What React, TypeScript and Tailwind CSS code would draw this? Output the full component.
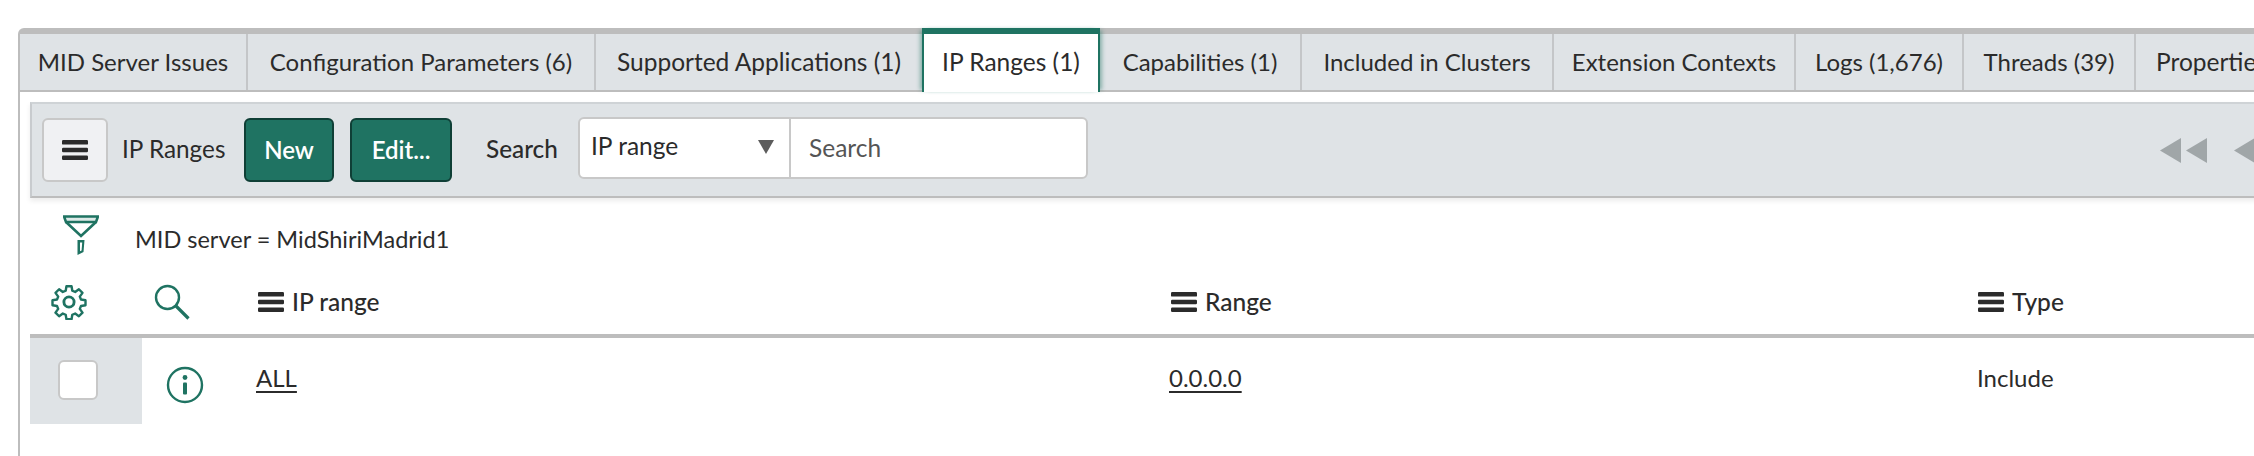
const TABS = [
  { label: "MID Server Issues", width: 228 },
  { label: "Configuration Parameters (6)", width: 348 },
  { label: "Supported Applications (1)", width: 326 },
  { label: "IP Ranges (1)", width: 178, active: true },
  { label: "Capabilities (1)", width: 202 },
  { label: "Included in Clusters", width: 252 },
  { label: "Extension Contexts", width: 242 },
  { label: "Logs (1,676)", width: 168 },
  { label: "Threads (39)", width: 172 },
  { label: "Properties", width: 160 },
];

function Bars({ className }: { className?: string }) {
  return (
    <svg className={className} viewBox="0 0 26 20" fill="#2b2b2b">
      <rect x="0" y="0" width="26" height="4.6" rx="1.2" />
      <rect x="0" y="7.7" width="26" height="4.6" rx="1.2" />
      <rect x="0" y="15.4" width="26" height="4.6" rx="1.2" />
    </svg>
  );
}

function Funnel() {
  return (
    <svg className="w-[36px] h-[41px]" viewBox="0 0 36 41" fill="none" stroke="#1f7362" strokeWidth="2.6">
      <path d="M1 1.5H35L33 7H3Z" fill="#1f7362" fillOpacity="0.15" />
      <path d="M3 7L18 21L33 7" />
      <path d="M14.5 25H21.5L20.5 37L14.5 40Z" fill="#1f7362" stroke="none" />
      <path d="M17 27.5H19.2L18.6 35.5L17 36.3Z" fill="#ffffff" stroke="none" />
    </svg>
  );
}

function Gear() {
  return (
    <svg className="w-[36px] h-[36px]" viewBox="0 0 24 24" fill="none" stroke="#1f7362" strokeWidth="1.6" strokeLinejoin="round">
      <path d="M10.3 1.5h3.4l.5 3 1.9.8 2.5-1.8 2.4 2.4-1.8 2.5.8 1.9 3 .5v3.4l-3 .5-.8 1.9 1.8 2.5-2.4 2.4-2.5-1.8-1.9.8-.5 3h-3.4l-.5-3-1.9-.8-2.5 1.8-2.4-2.4 1.8-2.5-.8-1.9-3-.5v-3.4l3-.5.8-1.9-1.8-2.5 2.4-2.4 2.5 1.8 1.9-.8z" />
      <circle cx="12" cy="12" r="3.4" strokeWidth="1.9" />
    </svg>
  );
}

function Magnifier() {
  return (
    <svg className="w-[36px] h-[36px]" viewBox="0 0 36 36" fill="none" stroke="#1f7362">
      <circle cx="13.5" cy="13.5" r="11.5" strokeWidth="2.4" />
      <path d="M22 22L34.5 34.5" strokeWidth="3.2" />
    </svg>
  );
}

function Info() {
  return (
    <svg className="w-[38px] h-[38px]" viewBox="0 0 38 38" fill="none" stroke="#1f7362">
      <circle cx="19" cy="19" r="17" strokeWidth="2.4" />
      <rect x="17" y="16.5" width="4" height="12" rx="1" fill="#1f7362" stroke="none" />
      <circle cx="19" cy="11.5" r="2.4" fill="#1f7362" stroke="none" />
    </svg>
  );
}

function ColumnHead({ label }: { label: string }) {
  return (
    <div className="flex items-center gap-[8px] text-[24.5px] font-medium text-[#2b2b2b]">
      <Bars className="w-[26px] h-[20px]" />
      <span>{label}</span>
    </div>
  );
}

export default function App() {
  return (
    <div className="w-[2254px] h-[456px] overflow-hidden bg-white pt-[28px] pl-[18px] font-['Lato',sans-serif] text-[#2b2b2b]">
      <div className="w-[2400px] h-[428px] border-l-2 border-t-[6px] border-[#bdbdbd] rounded-tl-[6px]">
        {/* Tabs */}
        <div className="flex h-[58px] border-b-[2px] border-[#bdbdbd] bg-[#dfe3e6]">
          {TABS.map((tab, i) =>
            tab.active ? (
              <div
                key={tab.label}
                style={{ width: tab.width }}
                className="shrink-0 -mt-[6px] -mb-[2px] h-[64px] flex items-center justify-center bg-white text-[24.5px] border-x-2 border-t-[6px] border-[#1f7362] shadow-[4px_0_4px_-2px_rgba(31,115,98,0.45),-4px_0_4px_-2px_rgba(31,115,98,0.45)] z-10"
              >
                <span className="pb-[2px]">{tab.label}</span>
              </div>
            ) : (
              <div
                key={tab.label}
                style={{ width: tab.width }}
                className={
                  i === TABS.length - 1
                    ? "shrink-0 flex items-center pl-[20px] text-[24.5px]"
                    : TABS[i + 1]?.active
                      ? "shrink-0 flex items-center justify-center text-[24.5px]"
                      : "shrink-0 flex items-center justify-center text-[24px] border-r-2 border-[#c4c6c8]"
                }
              >
                {tab.label}
              </div>
            ),
          )}
        </div>

        {/* Toolbar */}
        <div className="flex items-center h-[96px] ml-[10px] mt-[10px] pl-[10px] bg-[#dfe3e6] border-l-2 border-t-2 border-b-2 border-t-[#cfd3d6] border-l-[#c8cbce] border-b-[#bdbdbd] shadow-[0_3px_5px_rgba(0,0,0,0.08)]">
          <button className="flex items-center justify-center w-[66px] h-[64px] bg-[#f0f1f3] border-2 border-[#c8c8c8] rounded-[6px]">
            <Bars className="w-[26px] h-[20px]" />
          </button>
          <span className="ml-[14px] w-[122px] -mt-[2px] text-[24.3px]">IP Ranges</span>
          <button className="w-[90px] h-[64px] bg-[#1f7362] border-2 border-[#0f3f36] rounded-[6px] text-white text-[24px] font-semibold">New</button>
          <button className="ml-[16px] w-[102px] h-[64px] bg-[#1f7362] border-2 border-[#0f3f36] rounded-[6px] text-white text-[24px] font-semibold">Edit...</button>
          <span className="ml-[34px] w-[92px] -mt-[2px] text-[24.3px] font-medium">Search</span>
          <div className="flex h-[62px] w-[510px] -mt-[4px] bg-white border-2 border-[#c8c8c8] rounded-[6px]">
            <div className="flex items-center justify-between w-[211px] pl-[11px] pr-[15px] border-r-2 border-[#c8c8c8] text-[24.5px]">
              <span className="-mt-[3px]">IP range</span>
              <svg className="w-[16px] h-[14px] -mt-[3px]" viewBox="0 0 16 14" fill="#5c5c5c">
                <path d="M0 0H16L8 14Z" />
              </svg>
            </div>
            <div className="flex items-center pl-[18px] text-[24.5px] text-[#555555]">Search</div>
          </div>
          <div className="ml-[1072px] flex items-center gap-[26px]">
            <svg className="w-[48px] h-[25px]" viewBox="0 0 48 25" fill="#a0a6a8">
              <path d="M21 0V25L0 12.5Z" />
              <path d="M47 0V25L26 12.5Z" />
            </svg>
            <svg className="w-[21px] h-[25px]" viewBox="0 0 21 25" fill="#a0a6a8">
              <path d="M21 0V25L0 12.5Z" />
            </svg>
          </div>
        </div>

        {/* Filter */}
        <div className="flex items-center h-[41px] mt-[17px] ml-[43px]">
          <Funnel />
          <span className="ml-[36px] mt-[8px] text-[23.5px]">MID server = MidShiriMadrid1</span>
        </div>

        {/* Table */}
        <div className="ml-[10px]">
          <div className="grid grid-cols-[112px_96px_933px_807px_1fr] items-center h-[82px] pt-[14px] border-b-4 border-[#bdbdbd]">
            <div className="pl-[21px]"><Gear /></div>
            <div className="pl-[12px]"><Magnifier /></div>
            <div className="pl-[20px]"><ColumnHead label="IP range" /></div>
            <ColumnHead label="Range" />
            <ColumnHead label="Type" />
          </div>
          <div className="grid grid-cols-[112px_96px_933px_807px_1fr] items-center h-[86px] text-[24px]">
            <div className="flex items-center justify-center h-full bg-[#dfe3e6] pr-[16px] pb-[2px]">
              <div className="w-[40px] h-[40px] bg-white border-2 border-[#c8c8c8] rounded-[6px]" />
            </div>
            <div className="pl-[24px] pt-[8px]"><Info /></div>
            <div className="pl-[18px] -mt-[6px]"><span className="underline underline-offset-4">ALL</span></div>
            <div className="-ml-[2px] -mt-[6px]"><span className="underline underline-offset-4">0.0.0.0</span></div>
            <div className="-ml-[1px] -mt-[6px]">Include</div>
          </div>
        </div>
      </div>
    </div>
  );
}
